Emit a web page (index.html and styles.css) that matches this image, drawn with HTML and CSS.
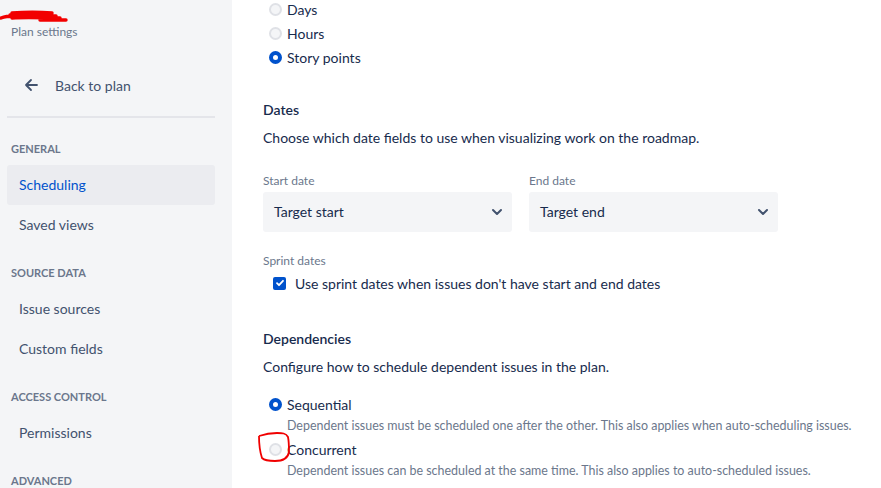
FILE: index.html
```html
<!DOCTYPE html>
<html>
<head>
<meta charset="utf-8">
<link rel="stylesheet" href="styles.css">
</head>
<body>
<div class="page">
  <aside class="sidebar">
    <div class="brand">
      <svg class="scribble" width="70" height="14" viewBox="0 0 70 14"><path d="M1 9 C6 7 10 7 14 7 M12 4 C25 3 40 3 52 4 M10 6 C25 5 40 6 56 7 M12 9 C28 8 45 9 60 9 M40 11 C50 11 58 11 66 11" stroke="#f20000" stroke-width="3.4" fill="none" stroke-linecap="round"/></svg>
      <div class="brand-sub">Plan settings</div>
    </div>
    <div class="back">
      <svg width="16" height="16" viewBox="0 0 16 16"><path d="M14 8H3M8 3L3 8l5 5" stroke="#42526e" stroke-width="1.8" fill="none" stroke-linecap="round" stroke-linejoin="round"/></svg>
      <span>Back to plan</span>
    </div>
    <div class="sep"></div>
    <div class="group first">General</div>
    <div class="item active">Scheduling</div>
    <div class="item">Saved views</div>
    <div class="group">Source data</div>
    <div class="item">Issue sources</div>
    <div class="item">Custom fields</div>
    <div class="group">Access control</div>
    <div class="item">Permissions</div>
    <div class="group">Advanced</div>
  </aside>
  <main class="main">
    <div class="radios top">
      <label class="radio"><span class="dot"></span>Days</label>
      <label class="radio"><span class="dot"></span>Hours</label>
      <label class="radio"><span class="dot on"></span>Story points</label>
    </div>
    <h3 class="heading">Dates</h3>
    <p class="desc">Choose which date fields to use when visualizing work on the roadmap.</p>
    <div class="selects">
      <div class="field">
        <div class="flabel">Start date</div>
        <div class="select"><span>Target start</span><svg width="14" height="14" viewBox="0 0 14 14"><path d="M3 5l4 4 4-4" stroke="#42526e" stroke-width="2" fill="none" stroke-linecap="round" stroke-linejoin="round"/></svg></div>
      </div>
      <div class="field">
        <div class="flabel">End date</div>
        <div class="select"><span>Target end</span><svg width="14" height="14" viewBox="0 0 14 14"><path d="M3 5l4 4 4-4" stroke="#42526e" stroke-width="2" fill="none" stroke-linecap="round" stroke-linejoin="round"/></svg></div>
      </div>
    </div>
    <div class="flabel sprint">Sprint dates</div>
    <label class="check"><span class="box"><svg width="10" height="10" viewBox="0 0 10 10"><path d="M2 5.2l2 2 4-4.4" stroke="#fff" stroke-width="1.8" fill="none" stroke-linecap="round" stroke-linejoin="round"/></svg></span>Use sprint dates when issues don't have start and end dates</label>
    <h3 class="heading deps">Dependencies</h3>
    <p class="desc">Configure how to schedule dependent issues in the plan.</p>
    <div class="opts">
      <label class="radio"><span class="dot on"></span>Sequential</label>
      <div class="help">Dependent issues must be scheduled one after the other. This also applies when auto-scheduling issues.</div>
      <label class="radio circled"><span class="dot"></span>Concurrent
        <svg class="mark" width="36" height="32" viewBox="0 0 36 32"><path d="M2 5 C8 3 14 2 20 2 C25 2 29 2 31 6 C32 11 32 17 32 21 C31 27 26 30 18 30 C12 30 7 29 5 27 C3 21 2 12 2 5" stroke="#f00000" stroke-width="1.8" fill="none" stroke-linejoin="round"/></svg>
      </label>
      <div class="help">Dependent issues can be scheduled at the same time. This also applies to auto-scheduled issues.</div>
    </div>
  </main>
</div>
</body>
</html>
```
FILE: styles.css
```css
* { box-sizing: border-box; }
html, body { margin: 0; padding: 0; }
body {
  font-family: Lato, "Noto Sans", sans-serif;
  font-size: 14px;
  color: #172b4d;
  background: #fff;
  width: 881px;
  height: 488px;
  overflow: hidden;
}
.page { display: flex; height: 488px; }
.sidebar {
  width: 232px;
  flex: none;
  background: #f4f5f7;
  padding: 0 17px 0 7px;
}
.brand { padding: 9px 0 0 4px; height: 55px; }
.scribble { display: block; margin-left: -11px; }
.brand-sub { font-size: 12px; color: #6b778c; margin-top: 1px; }
.back {
  display: flex; align-items: center;
  height: 60px; padding-left: 16px; gap: 16px;
  color: #42526e; font-size: 14px;
}
.sep { height: 2px; background: #e4e5ea; margin-top: 1px; }
.group {
  font-size: 11px; font-weight: 700; text-transform: uppercase;
  color: #6b778c; padding: 20px 0 8px 4px; line-height: 16px;
}
.group.first { margin-top: 3px; }
.item {
  height: 40px; line-height: 40px; padding-left: 12px;
  color: #42526e; border-radius: 3px;
}
.item.active { background: #ebecf0; color: #0052cc; }
.main { padding: 0 0 0 31px; flex: 1; }
.radios.top { margin-top: -3px; }
.radio {
  display: flex; align-items: center; height: 24px; gap: 5px;
  padding-left: 6px; position: relative;
}
.dot {
  width: 13px; height: 13px; border-radius: 50%;
  border: 2px solid #dfe1e6; background: #f4f5f7; flex: none;
}
.dot.on { border: 4px solid #0052cc; background: #fff; }
.heading { font-size: 14px; font-weight: 600; margin: 0; padding-top: 31px; line-height: 20px; }
.desc { margin: 8px 0 0; line-height: 20px; }
.selects { display: flex; gap: 17px; margin-top: 25px; }
.field { width: 249px; }
.flabel { font-size: 12px; color: #6b778c; line-height: 16px; }
.select {
  margin-top: 3px; height: 40px; background: #f4f5f7; border-radius: 3px;
  display: flex; align-items: center; justify-content: space-between;
  padding: 0 8px 1px 11px;
}
.sprint { margin-top: 21px; }
.check { display: flex; align-items: center; gap: 9px; padding-left: 10px; height: 24px; margin-top: 2px; }
.box {
  width: 13px; height: 13px; background: #0052cc; border-radius: 2px;
  display: flex; align-items: center; justify-content: center; flex: none;
}
.heading.deps { padding-top: 34px; }
.opts { margin-top: 15px; }
.help { font-size: 12.45px; color: #6b778c; padding-left: 24px; line-height: 18px; margin-top: 1px; }
.help + .radio { margin-top: 2px; }
.mark { position: absolute; left: -6px; top: -6px; }
```
